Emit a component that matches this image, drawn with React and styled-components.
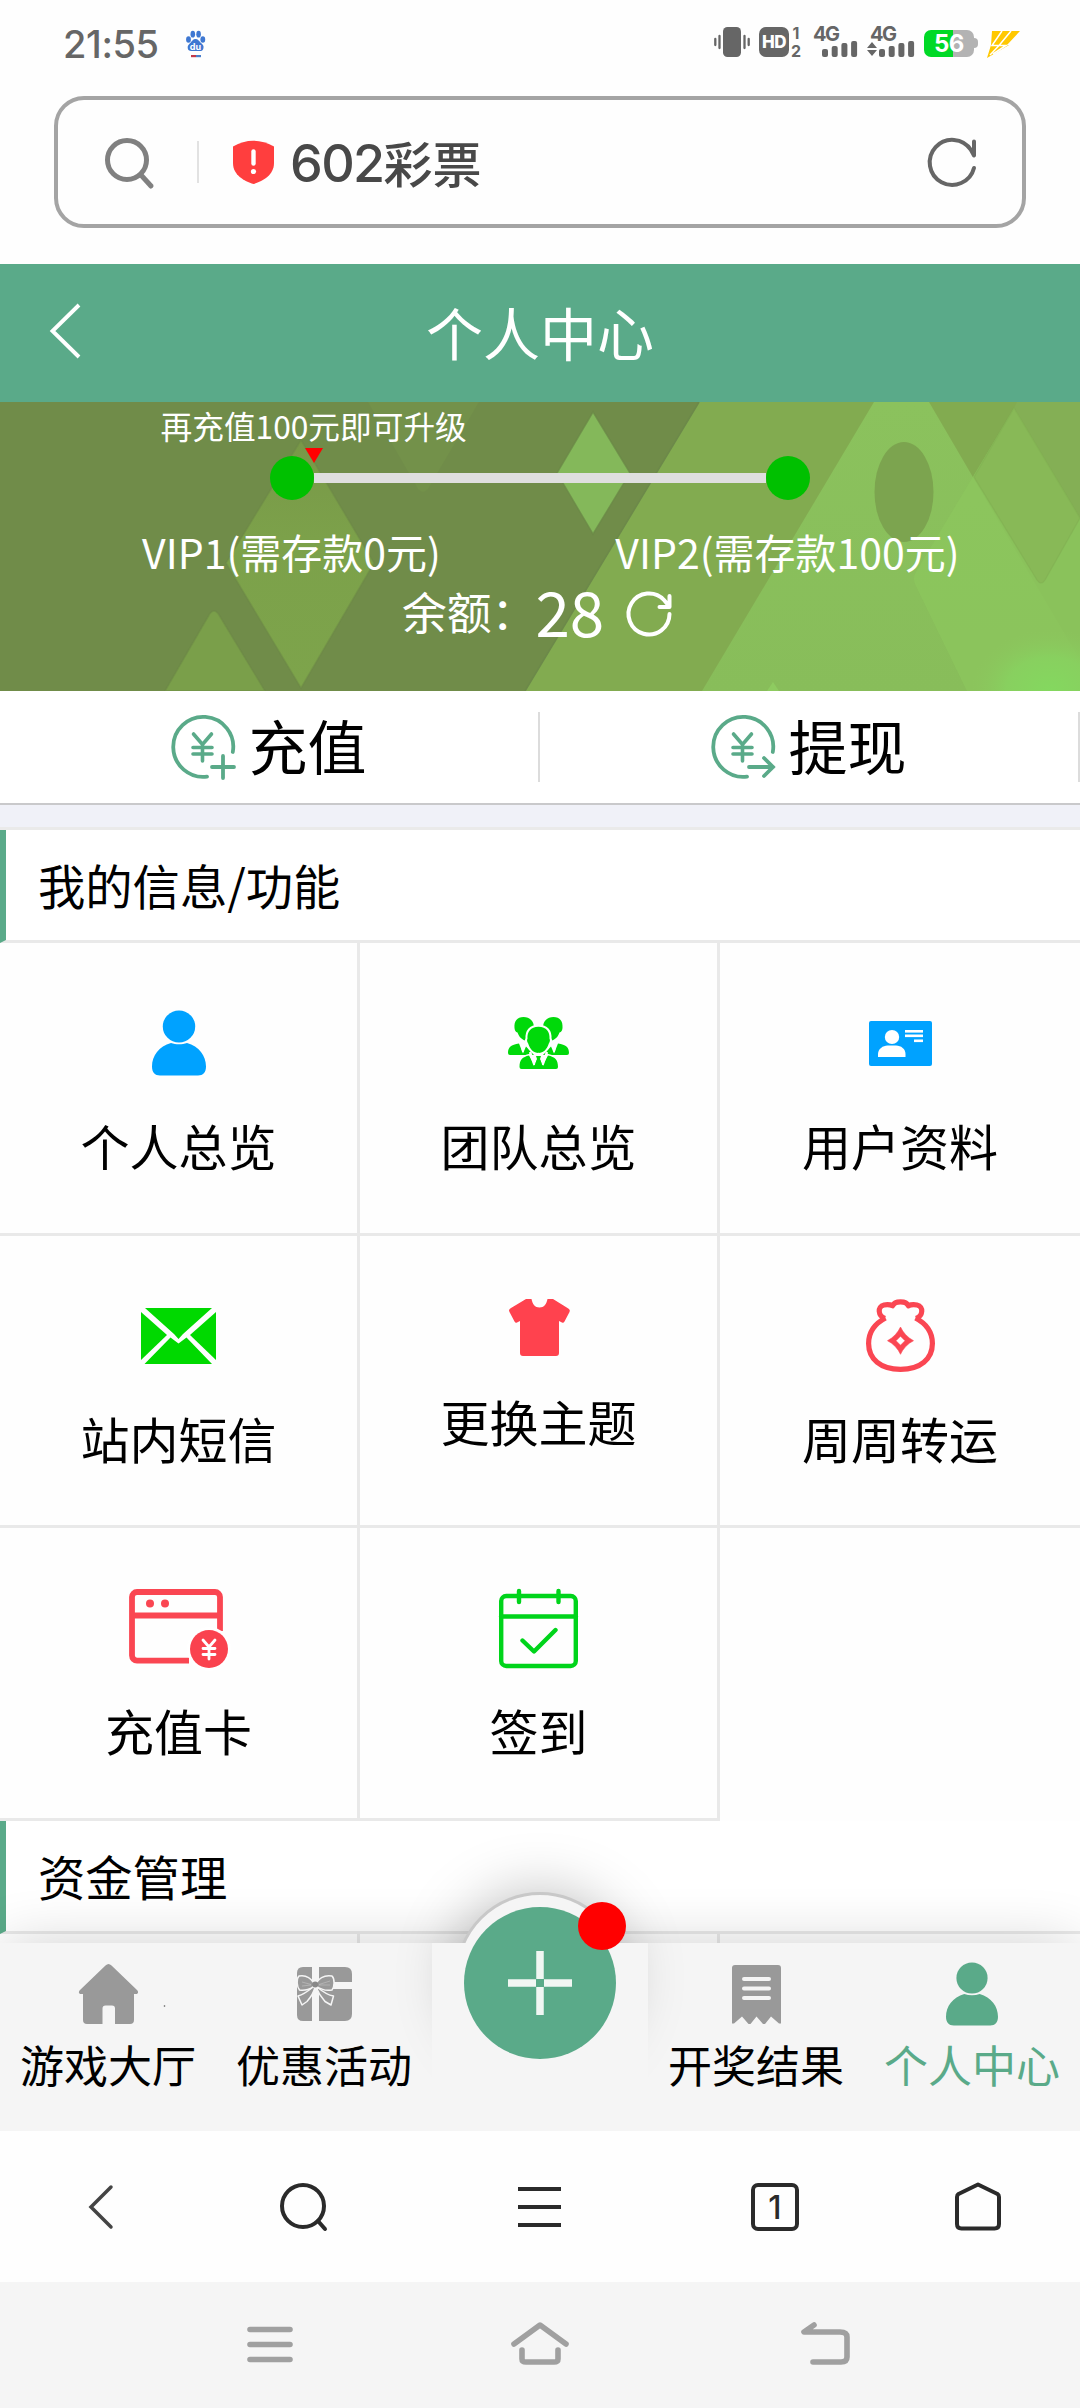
import React from "react";
import styled, { createGlobalStyle } from "styled-components";

const GREEN = "#5aaa89";
const CJK = '"Noto Sans CJK SC", "Noto Sans", sans-serif';
const LATIN = 'Inter, "Noto Sans CJK SC", sans-serif';

const GlobalStyle = createGlobalStyle`
  * { box-sizing: border-box; }
  html, body { margin: 0; padding: 0; }
  body { font-family: ${CJK}; background: #fdfdfd; color: #000; }
`;

const Screen = styled.div`
  width: 1080px;
  height: 2408px;
  overflow: hidden;
  display: flex;
  flex-direction: column;
  background: #fefefe;
`;

const Glyph = styled.svg`
  display: block;
  flex: none;
  overflow: visible;
  width: ${(p) => p.$w}px;
  height: ${(p) => p.$h}px;
`;

const Icon = ({ w, h, children, ...rest }) => (
  <Glyph $w={w} $h={h} viewBox={`0 0 ${w} ${h}`} fill="none" {...rest}>
    {children}
  </Glyph>
);

/* ---------- status bar ---------- */

const StatusBar = styled.header`
  flex: none;
  height: 96px;
  padding: 27px 60px 0 63px;
  display: flex;
  align-items: flex-start;
  color: #666;
  font-family: ${LATIN};
`;

const Clock = styled.span`
  width: 98px;
  margin-right: 25px;
  font-size: 38px;
  font-weight: 500;
  line-height: 34px;
  letter-spacing: -0.4px;
  white-space: nowrap;
`;

const StatusIcons = styled.div`
  margin-left: auto;
  display: flex;
  height: 31px;
`;

const Vibrate = styled(Icon)`
  margin-right: 9px;
`;

const HdBox = styled.div`
  width: 30px;
  height: 30px;
  border-radius: 7px;
  background: #666;
  color: #fff;
  font-size: 17px;
  font-weight: 800;
  line-height: 31px;
  text-align: center;
  letter-spacing: -0.6px;
`;

const SimStack = styled.div`
  width: 12px;
  margin: 0 11px 0 1px;
  display: flex;
  flex-direction: column;
  justify-content: space-between;
  font-size: 16px;
  font-weight: 700;
  line-height: 13px;
  text-align: center;
`;

const Signal = styled.div`
  width: ${(p) => p.$w}px;
  display: flex;
  flex-direction: column;
`;

const Network = styled.span`
  margin-left: ${(p) => p.$indent || 0}px;
  font-size: 20px;
  font-weight: 700;
  line-height: 15px;
  height: 14px;
  letter-spacing: -1.5px;
`;

const Battery = styled.div`
  width: 50px;
  height: 27px;
  margin-top: 3px;
  border-radius: 7px;
  background: linear-gradient(90deg, #00d926 29px, #b3b3b3 29px);
  color: #fff;
  font-size: 24px;
  font-weight: 700;
  line-height: 28px;
  text-align: center;
  letter-spacing: -0.5px;
`;

const BatteryNub = styled.div`
  width: 4px;
  height: 10px;
  margin: 11px 9px 0 0;
  border-radius: 0 4px 4px 0;
  background: #b3b3b3;
`;

const Bars = ({ offset, arrows }) => (
  <Icon w={48} h={16}>
    {arrows && <path d="M4 1 9 7H-1zM4 15 9 9H-1z" fill="#666" />}
    {[8, 11, 14, 16].map((h, i) => (
      <rect key={i} x={offset + i * 9.7} y={16 - h} width="6" height={h} rx="2" fill="#666" />
    ))}
  </Icon>
);

/* ---------- address bar ---------- */

const AddressBar = styled.div`
  flex: none;
  height: 132px;
  margin: 0 54px 36px;
  padding: 0 45px 0 47px;
  border: 4px solid #a4a4a4;
  border-radius: 30px;
  display: flex;
  align-items: center;
`;

const AddressDivider = styled.div`
  width: 2px;
  height: 42px;
  margin: 0 34px 0 43px;
  background: #e2e2e2;
`;

const Address = styled.div`
  flex: 1;
  margin-left: 16px;
  display: flex;
  align-items: center;
  color: #484848;
  font-size: 49px;
  font-weight: 500;
  line-height: 60px;
`;

const Digits = styled.span`
  padding-top: 4px;
  font-family: ${LATIN};
  font-size: 52px;
  letter-spacing: -1.6px;
`;

/* ---------- page header ---------- */

const PageHeader = styled.div`
  flex: none;
  height: 138px;
  padding: 0 50px 5px;
  display: grid;
  grid-template-columns: 32px 1fr 32px;
  align-items: center;
  background: ${GREEN};
  color: #fff;
`;

const PageTitle = styled.h1`
  margin: 0;
  font-size: 57px;
  font-weight: 400;
  line-height: 70px;
  text-align: center;
`;

/* ---------- VIP banner ---------- */

const Banner = styled.section`
  flex: none;
  position: relative;
  isolation: isolate;
  height: 289px;
  overflow: hidden;
  background: #708c49;
  color: #fff;
`;

const BannerArt = styled.svg`
  position: absolute;
  inset: 0;
  z-index: -1;
  width: 1080px;
  height: 289px;
`;

const UpgradeHint = styled.div`
  height: 54px;
  padding-left: 160.5px;
  font-size: 31.7px;
  line-height: 47px;
`;

const Track = styled.div`
  position: relative;
  height: 44px;
  margin-left: 270px;
  display: flex;
  align-items: center;
`;

const Dot = styled.div`
  width: 44px;
  height: 44px;
  border-radius: 50%;
  background: #00c000;
`;

const Rail = styled.div`
  width: 452px;
  height: 10px;
  background: #dfdfdf;
`;

const Pointer = styled.div`
  position: absolute;
  left: 35px;
  top: -8px;
  border: solid transparent;
  border-width: 15px 9px 0;
  border-top-color: #f00;
`;

const LevelRow = styled.div`
  margin: 28px 0 0 43.5px;
  display: grid;
  grid-template-columns: 496px 496px;
  font-size: 41px;
  line-height: 46px;
  text-align: center;
`;

const Balance = styled.div`
  height: 62px;
  margin-top: 5px;
  padding-left: 402px;
  display: flex;
  align-items: center;
  font-size: 44.8px;
`;

const Amount = styled.span`
  margin: 0 23px 0 -1px;
  font-size: 62px;
  line-height: 62px;
`;

const RefreshIcon = styled(Icon)`
  margin-top: 4px;
`;

/* ---------- deposit / withdraw ---------- */

const Actions = styled.div`
  flex: none;
  height: 114px;
  display: grid;
  grid-template-columns: 1fr 1fr;
  border-bottom: 2px solid #c9c9cb;
  background: #fff;
`;

const Action = styled.div`
  padding-left: 171px;
  display: flex;
  align-items: center;
  font-size: 59px;
`;

const ActionLabel = styled.span`
  margin: -4px auto 0 13.5px;
  line-height: 70px;
`;

const ActionDivider = styled.div`
  width: 2px;
  height: 70px;
  background: #dcdcdc;
`;

const Spacer = styled.div`
  flex: none;
  height: 25px;
  background: #f0f1f8;
  border-bottom: 3px solid #eaeaea;
`;

/* ---------- function grid ---------- */

const Sections = styled.main`
  flex: none;
  height: 1113px;
  overflow: hidden;
`;

const SectionTitle = styled.h2`
  height: 113px;
  margin: 0;
  padding-left: 32px;
  border-left: 6px solid ${GREEN};
  border-bottom: 3px solid #e9e9e9;
  font-size: 47.3px;
  font-weight: 400;
  line-height: 110px;
  background: #fff;
`;

const FunctionGrid = styled.div`
  display: grid;
  grid-template-columns: repeat(3, 360px);
  grid-auto-rows: 292.67px;
`;

const NextGrid = styled(FunctionGrid)`
  grid-auto-rows: 60px;
`;

const Cell = styled.div`
  padding-top: 50px;
  display: flex;
  flex-direction: column;
  align-items: center;
  border-right: ${(p) => (p.$last ? 0 : 3)}px solid #e9e9e9;
  border-bottom: 3px solid #e9e9e9;
`;

const IconSlot = styled.div`
  height: ${(p) => p.$h}px;
  display: flex;
  align-items: center;
`;

const CellLabel = styled.div`
  margin-top: 17px;
  font-size: 49px;
  line-height: 69px;
`;

/* ---------- tab bar ---------- */

const TabBar = styled.nav`
  flex: none;
  position: relative;
  height: 188px;
  display: grid;
  grid-template-columns: repeat(5, 216px);
  background: #f5f5f5;
  box-shadow: 0 0 60px -4px rgba(0, 0, 0, 0.2);
`;

const Tab = styled.div`
  padding-top: 18px;
  display: flex;
  flex-direction: column;
  align-items: center;
  color: ${(p) => (p.$active ? GREEN : "#000")};
`;

const TabIcon = styled.div`
  height: 66px;
  display: flex;
  align-items: center;
`;

const TabLabel = styled.span`
  margin-top: 7px;
  font-size: 44px;
  line-height: 61px;
`;

const AddTab = styled.div`
  position: relative;
  display: flex;
  justify-content: center;
`;

const Bulge = styled.div`
  position: absolute;
  left: 22.5px;
  top: -51px;
  width: 170px;
  height: 170px;
  border-radius: 50%;
  border: 3px solid #c8c8c8;
  background: #f5f5f5;
  box-shadow: 0 0 60px rgba(0, 0, 0, 0.26);
`;

const AddBase = styled.div`
  position: absolute;
  inset: 0;
  background: #f5f5f5;
`;

const AddButton = styled.div`
  position: relative;
  width: 152px;
  height: 152px;
  margin-top: -36px;
  border-radius: 50%;
  background: ${GREEN};
  display: grid;
  place-items: center;
`;

const Badge = styled.div`
  position: absolute;
  left: 114px;
  top: -5px;
  width: 48px;
  height: 48px;
  border-radius: 50%;
  background: #f00;
`;

/* ---------- browser and system bars ---------- */

const BrowserBar = styled.div`
  flex: none;
  position: relative;
  height: 151px;
  display: grid;
  grid-template-columns: 202px 203px 269px 202px 203px;
  place-items: center;
  background: #fefefe;
`;

const TabCount = styled.div`
  width: 48px;
  height: 48px;
  border: 4px solid #2a2a2a;
  border-radius: 7px;
  color: #2a2a2a;
  font-family: ${LATIN};
  font-size: 32px;
  font-weight: 500;
  line-height: 41px;
  text-align: center;
`;

const SystemBar = styled.div`
  flex: none;
  position: relative;
  height: 126px;
  padding: 0 0 4px 135px;
  display: grid;
  grid-template-columns: 270px 270px 300px;
  place-items: center;
  background: #f5f5f5;
`;

/* ---------- drawings ---------- */

const Paw = () => (
  <Icon w={19} h={31}>
    <g fill="#3f78d2">
      <ellipse cx="2.500" cy="12.500" rx="2.400" ry="3.300" />
      <ellipse cx="6.800" cy="7.200" rx="2.300" ry="3.400" />
      <ellipse cx="12.600" cy="7.200" rx="2.300" ry="3.400" />
      <ellipse cx="16.800" cy="12.500" rx="2.400" ry="3.300" />
      <path d="M9.500 12c2.500 0 3.500 2 5 3.500 2 1.800 3.500 3 3 5.500-.5 3-2.500 3.200-4.500 3H6c-2.500.2-4-.5-4.300-3-.3-2.500 1.300-3.700 3-5.500C6.200 14 7 12 9.500 12z" />
    </g>
    <rect x="5" y="28" width="5" height="2.200" fill="#c23a4a" />
    <rect x="10" y="28" width="5" height="2.200" fill="#4a7fc9" />
    <text x="9.500" y="22.500" fill="#fff" fontSize="9" fontWeight="700" textAnchor="middle" fontFamily="Inter, sans-serif">du</text>
  </Icon>
);

const Person = ({ w, h, color }) => (
  <Glyph $w={w} $h={h} viewBox="0 0 54 65" preserveAspectRatio="none">
    <ellipse cx="27" cy="15.500" rx="16.200" ry="16" fill={color} />
    <path d="M19 32c5 1.800 11 1.800 16 0C47 35.500 54 44.500 54 55.500c0 6-3 9-8 9H8c-5 0-8-3-8-9 0-11 7-20 19-23.500z" fill={color} />
  </Glyph>
);

const Team = () => (
  <Icon w={61} h={52}>
    <g fill="#00d90a">
      <path d="M15.500 0C22 0 26 4 26 11v8l-7 5c-5-1-8-4-9.500-8.500C7.500 15 6.800 13.500 6.500 11 6 4 9 0 15.500 0z" />
      <path d="M45.500 0C39 0 35 4 35 11v8l7 5c5-1 8-4 9.500-8.500 2-.5 2.700-2 3-4.500.5-7-2.500-11-9-11z" />
      <path d="M11 26.500l4 10 3-7 8 8.500H2q-2 0-2-2c0-6 3-8 11-9.500z" />
      <path d="M50 26.500l-4 10-3-7-8 8.500h24q2 0 2-2c0-6-3-8-11-9.500z" />
    </g>
    <path d="M15 35l-1.500-7M46 35l1.500-7" stroke="#fff" strokeWidth="1.800" />
    <path d="M30.500 9.700c8 0 11.500 5 11 12 .8 1 .5 3-.8 5C39 32 35.500 36 30.500 36s-8.500-4-10.200-9.300c-1.300-2-1.600-4-.8-5-.5-7 3-12 11-12z" fill="#00d90a" stroke="#fff" strokeWidth="4" paintOrder="stroke" />
    <path d="M21 38.500l5.500 10 4-9.500 4 9.500 5.500-10c7 1.500 10 4 10 11.500q0 2-2 2H13.500q-2 0-2-2c0-7.500 3-10 9.500-11.500z" fill="#00d90a" stroke="#fff" strokeWidth="3" paintOrder="stroke" />
    <path d="M22 35l4.500 13M39 35l-4.500 13" stroke="#fff" strokeWidth="2.400" />
    <path d="M28 39h5l-1 3 2.500 7h-8l2.500-7z" fill="#00d90a" />
  </Icon>
);

const IdCard = () => (
  <Icon w={63} h={45}>
    <rect width="63" height="45" rx="2" fill="#00a2ff" />
    <g fill="#fff">
      <ellipse cx="23" cy="16" rx="7.200" ry="7" />
      <path d="M9 36v-3c0-5 5-8.500 9.500-8.500h8.500c5 0 9.500 3.500 9.500 8.500v3z" />
      <rect x="36" y="9" width="18" height="2.600" />
      <rect x="36" y="13.500" width="18" height="2.600" />
      <rect x="45" y="18.500" width="9" height="2.600" />
    </g>
  </Icon>
);

const Mail = () => (
  <Icon w={75} h={56}>
    <g fill="#00d900">
      <path d="M4 0h67L42 26l-4.500 5-4.500-5z" />
      <path d="M0 4l26 23L0 52z" />
      <path d="M75 4L49 27l26 25z" />
      <path d="M3.500 56L29.500 29.500l8 6 8-6L71 56z" />
    </g>
  </Icon>
);

const Shirt = () => (
  <Icon w={62} h={57}>
    <path d="M18 0h5.500c1 5 3.500 8.500 8 8.500s7-3.500 8-8.500H45l14.500 9c2.500 1.500 2.700 2.200 2 4l-5 9.500c-.7 1.200-1.500 1.500-2.500 1L51 22v32c0 2-1 3-3 3H15c-2 0-3-1-3-3V22l-3 1.500c-1 .5-1.800.2-2.500-1l-5-9.500c-.9-1.800-.7-2.500 1.500-4z" fill="#ff424e" />
  </Icon>
);

const Bag = () => (
  <Icon w={69} h={73} stroke="#fa4652" strokeWidth="5.200" strokeLinejoin="round">
    <path d="M19 19.500c-7-2.500-8-12-1-13.500 3.500-.7 6-.5 8.500.8C29 1.500 40 1.500 42.500 6.800c2.500-1.300 5-1.500 8.500-.8 7 1.500 6 11-1 13.500" />
    <path d="M19.500 19C8 25 2.600 34 2.600 44.500c0 15.500 12 25.800 31.900 25.800s31.900-10.300 31.900-25.800C66.400 34 61 25 49.500 19" />
    <path fillRule="evenodd" d="M34.500 28c2.500 5.500 7 10.500 13 13.700-6 3-10.500 8-13 13.600-2.500-5.600-7-10.600-13-13.600 6-3.200 10.500-8.200 13-13.700zM34.500 37.200L30 41.700l4.500 4.500 4.500-4.500z" fill="#fa4652" stroke="#fa4652" strokeWidth="0.600" />
  </Icon>
);

const RechargeCard = () => (
  <Icon w={99} h={79} stroke="#fa4652">
    <path d="M60 71.600H8a5 5 0 0 1-5-5V8a5 5 0 0 1 5-5h78a5 5 0 0 1 5 5v34M3 26.500h88" strokeWidth="5.800" />
    <circle cx="80" cy="60" r="22" fill="#fff" stroke="none" />
    <circle cx="80" cy="60" r="19" fill="#fa424e" stroke="none" />
    <circle cx="21" cy="14.500" r="4" fill="#fa4652" stroke="none" />
    <circle cx="36" cy="14.500" r="4" fill="#fa4652" stroke="none" />
    <path d="M74 51l6 7 6-7M80 58v12M74 59.500h12M74 65.500h12" stroke="#fff" strokeWidth="2.800" strokeLinecap="round" />
  </Icon>
);

const Calendar = () => (
  <Icon w={79} h={79} stroke="#00d41b" strokeWidth="4.400" strokeLinecap="round" strokeLinejoin="round">
    <rect x="2.200" y="7" width="74.600" height="70" rx="5" />
    <path d="M2 27.500h75M20 2v11M59.500 2v11M23.500 51.500l11.500 11 21.500-21.500" />
  </Icon>
);

const Yen = ({ tail }) => (
  <Icon w={64} h={64} stroke={GREEN} strokeWidth="3.800" strokeLinecap="round">
    <path d="M36 61.600A30 30 0 1 1 61.800 37" />
    <path d="M22.500 19L31.500 29.500 40.500 19M31.500 29.500V46M22 32.500h19M22 39h19" strokeWidth="3.600" />
    {tail === "plus" ? <path d="M41 52h22M52 41v22" /> : <path d="M38 52h24M53 43l9 9-9 9" />}
  </Icon>
);

const Home = () => (
  <Icon w={59} h={60} fill="#999">
    <path d="M26.500 1.500q3-3 6 0L58 26c2 2 1 4-1 4h-2v26q0 4-4 4H36V44.500q0-3-3-3h-6.500q-3 0-3 3V60H8q-4 0-4-4V30H2c-2 0-3-2-1-4z" />
    <circle cx="85.500" cy="42" r="0.800" fill="#555" />
  </Icon>
);

const Gift = () => (
  <Icon w={55} h={54}>
    <g fill="#999">
      <path d="M15 0v54H6q-6 0-6-6V6q0-6 6-6z" />
      <path d="M22 0h26q7 0 7 7v8H22zM22 22h33v25q0 7-7 7H22z" />
    </g>
    <g fill="#999" stroke="#f5f5f5" strokeWidth="1.500" strokeLinejoin="round">
      <path d="M16 20C10 25 5 28 1 29l4 9 5-3.500C14 30 17 25 18 20zM20 20c6 5 10 8 16.500 9L34 38l-6-3.500C24 30 21 25 19 20z" />
      <path d="M17 16C13 10 7 8 2 9c-3 3-2 11 .5 14C8 24 14 22 17 19zM19 16c4-6 10-8 16-7 3 3 2.500 11 0 14-6 1-12-1-16-4z" />
    </g>
    <circle cx="18.200" cy="17.500" r="3" fill="#888" />
    <path d="M5 15l9 2.500M5 19l9-1M33 14l-11 3.500M33 18l-11 0" stroke="#c4c4c4" strokeWidth="0.600" />
  </Icon>
);

const Receipt = () => (
  <Icon w={49} h={59}>
    <path d="M3 0h43q3 0 3 3v55.500h-2l-8-7L33 59h-2l-6.500-7.500L18.500 59h-2l-6.500-7.500L2 58.500H0V3q0-3 3-3z" fill="#999" />
    <path d="M12 14h25M12 23.500h25M12 33h25" stroke="#f5f5f5" strokeWidth="4" strokeLinecap="round" />
  </Icon>
);

const BannerBackground = () => (
  <BannerArt viewBox="0 0 1080 289">
    <defs>
      <linearGradient id="diamond" x1="0" y1="0" x2="0" y2="1">
        <stop offset="0" stopColor="#789848" />
        <stop offset="0.400" stopColor="#7ca14a" />
        <stop offset="1" stopColor="#7da44b" />
      </linearGradient>
      <linearGradient id="beam" x1="0" y1="0" x2="0" y2="1">
        <stop offset="0" stopColor="#8bc25d" />
        <stop offset="1" stopColor="#88bd5a" />
      </linearGradient>
      <radialGradient id="glow">
        <stop offset="0" stopColor="#84d85f" />
        <stop offset="0.550" stopColor="#88d05f" />
        <stop offset="1" stopColor="#8cc65d" stopOpacity="0" />
      </radialGradient>
    </defs>
    <path d="M368 0h111l-51 87q-5 6-10 0z" fill="#73914a" />
    <path d="M301 38l73 123-73 125-75-125z" fill="url(#diamond)" stroke="#6b8846" strokeOpacity=".5" strokeWidth="1.500" />
    <path d="M209 213q5-8 10 0l46 76H165z" fill="#7a9f4a" stroke="#6b8846" strokeOpacity=".5" strokeWidth="1.500" />
    <path d="M699 0h381v289H525z" fill="#82ab50" />
    <path d="M699 0L525 289" stroke="#6c8949" strokeWidth="1.600" />
    <path d="M593 10l37 61-37 61-36-61z" fill="#84b85a" stroke="#6a8746" strokeOpacity=".7" strokeWidth="1.500" />
    <path d="M874 0h55l169 289H702z" fill="url(#beam)" />
    <path d="M1014 6L1017 0h63v116z" fill="#84af55" />
    <path d="M1014 6L916 170q-4 7 0 14l51 105h113V116z" fill="#8cc65d" fillOpacity=".85" />
    <path d="M1014 6l66 110-35 62q-4 6-8 0L974 75z" fill="#88b957" stroke="#7fae52" strokeOpacity=".5" strokeWidth="1.200" />
    <ellipse cx="904" cy="90" rx="29.500" ry="50" fill="#7ca44f" />
    <path d="M767 289l6-9 6 9z" fill="#8ecb60" />
    <ellipse cx="1050" cy="289" rx="80" ry="62" fill="url(#glow)" />
  </BannerArt>
);

const functions = [
  { label: "个人总览", icon: <Person w={54} h={65} color="#00a2ff" /> },
  { label: "团队总览", icon: <Team /> },
  { label: "用户资料", icon: <IdCard /> },
  { label: "站内短信", icon: <Mail /> },
  { label: "更换主题", icon: <Shirt />, slot: 83 },
  { label: "周周转运", icon: <Bag /> },
  { label: "充值卡", icon: <RechargeCard /> },
  { label: "签到", icon: <Calendar /> },
];

const NavTab = ({ label, icon, active }) => (
  <Tab $active={active}>
    <TabIcon>{icon}</TabIcon>
    <TabLabel>{label}</TabLabel>
  </Tab>
);

export default function App() {
  return (
    <>
      <GlobalStyle />
      <Screen>
        <StatusBar>
          <Clock>21:55</Clock>
          <Paw />
          <StatusIcons>
            <Vibrate w={36} h={30}>
              <rect x="9" width="18" height="30" rx="4.500" fill="#666" />
              <path d="M5.500 9v12M30.500 9v12M1.300 12v6M34.700 12v6" stroke="#666" strokeWidth="2.300" strokeLinecap="round" />
            </Vibrate>
            <HdBox>HD</HdBox>
            <SimStack>
              <span>1</span>
              <span>2</span>
            </SimStack>
            <Signal $w={55}>
              <Network>4G</Network>
              <Bars offset={9} />
            </Signal>
            <Signal $w={56}>
              <Network $indent={2}>4G</Network>
              <Bars offset={11} arrows />
            </Signal>
            <Battery>56</Battery>
            <BatteryNub />
            <Icon w={33} h={31}>
              <path d="M5 4h28L20 18h2L0 31l4-13z" fill="#ffc800" />
              <path d="M15 4L5 18.500h7L3 28M24 4L12 18.500h7L6 27" stroke="#fff" strokeWidth="1.500" />
            </Icon>
          </StatusIcons>
        </StatusBar>

        <AddressBar>
          <Icon w={49} h={51} stroke="#808080" strokeWidth="5">
            <circle cx="22" cy="23" r="19.500" />
            <path d="M36 38l10 11" strokeLinecap="round" />
          </Icon>
          <AddressDivider />
          <Icon w={41} h={44}>
            <path d="M0 6.500Q20-5 41 6.500V23c0 12-11 18-20.500 21C11 41 0 35 0 23z" fill="#ff3e3e" />
            <path d="M20.500 11.500v12" stroke="#fff" strokeWidth="4.400" strokeLinecap="round" />
            <circle cx="20.500" cy="31.500" r="2.600" fill="#fff" />
          </Icon>
          <Address>
            <Digits>602</Digits>彩票
          </Address>
          <Icon w={48} h={50} stroke="#666" strokeWidth="4" strokeLinecap="round" strokeLinejoin="round">
            <path d="M45 31A22.500 22.500 0 1 1 42 13l3 5.500V4.500" />
          </Icon>
        </AddressBar>

        <PageHeader>
          <Icon w={32} h={56} stroke="#fff" strokeWidth="3.900">
            <path d="M29 2L2.500 28 29 54" />
          </Icon>
          <PageTitle>个人中心</PageTitle>
        </PageHeader>

        <Banner>
          <BannerBackground />
          <UpgradeHint>再充值100元即可升级</UpgradeHint>
          <Track>
            <Dot />
            <Rail />
            <Dot />
            <Pointer />
          </Track>
          <LevelRow>
            <span>VIP1(需存款0元)</span>
            <span>VIP2(需存款100元)</span>
          </LevelRow>
          <Balance>
            余额：<Amount>28</Amount>
            <RefreshIcon w={45} h={42} stroke="#fff" strokeWidth="4" strokeLinecap="round" strokeLinejoin="round">
              <path d="M42.500 23A20.500 20.500 0 1 1 37 9l5 6M42.500 5v11H32.500" />
            </RefreshIcon>
          </Balance>
        </Banner>

        <Actions>
          <Action>
            <Yen tail="plus" />
            <ActionLabel>充值</ActionLabel>
            <ActionDivider />
          </Action>
          <Action>
            <Yen tail="arrow" />
            <ActionLabel>提现</ActionLabel>
            <ActionDivider />
          </Action>
        </Actions>
        <Spacer />

        <Sections>
          <SectionTitle>我的信息/功能</SectionTitle>
          <FunctionGrid>
            {functions.map((f, i) => (
              <Cell key={f.label} $last={i % 3 === 2}>
                <IconSlot $h={f.slot || 100}>{f.icon}</IconSlot>
                <CellLabel>{f.label}</CellLabel>
              </Cell>
            ))}
          </FunctionGrid>
          <SectionTitle>资金管理</SectionTitle>
          <NextGrid>
            <Cell />
            <Cell />
            <Cell $last />
          </NextGrid>
        </Sections>

        <TabBar>
          <NavTab label="游戏大厅" icon={<Home />} />
          <NavTab label="优惠活动" icon={<Gift />} />
          <AddTab>
            <Bulge />
            <AddBase />
            <AddButton>
              <Icon w={64} h={64}>
                <path d="M0 32h28M36 32h28M32 0v28M32 36v28" stroke="#f1f6f3" strokeWidth="7.500" />
              </Icon>
              <Badge />
            </AddButton>
          </AddTab>
          <NavTab label="开奖结果" icon={<Receipt />} />
          <NavTab label="个人中心" icon={<Person w={52} h={63} color={GREEN} />} active />
        </TabBar>

        <BrowserBar>
          <Icon w={24} h={44} stroke="#444" strokeWidth="3.500" strokeLinecap="round">
            <path d="M22 2L2 22l20 20" />
          </Icon>
          <Icon w={48} h={48} stroke="#2a2a2a" strokeWidth="4" strokeLinecap="round">
            <circle cx="23" cy="23" r="21" />
            <path d="M38 38l7 8" />
          </Icon>
          <Icon w={43} h={40} stroke="#2a2a2a" strokeWidth="4">
            <path d="M0 2h43M0 20h43M0 38h43" />
          </Icon>
          <TabCount>1</TabCount>
          <Icon w={46} h={49} stroke="#2a2a2a" strokeWidth="4" strokeLinejoin="round">
            <path d="M23 2.500L42.500 12q1.500 1 1.500 3v27q0 4.500-4.500 4.500h-33Q2 46.500 2 42V15q0-2 1.500-3z" />
          </Icon>
        </BrowserBar>

        <SystemBar>
          <Icon w={46} h={37} stroke="#a0a0a0" strokeWidth="5.600" strokeLinecap="round">
            <path d="M3 4.500h40M3 19.500h40M3 34.500h40" />
          </Icon>
          <Icon w={58} h={43} stroke="#a0a0a0" strokeWidth="5.600" strokeLinecap="round" strokeLinejoin="round">
            <path d="M3 22L29 3l26 19M11 28v9q0 3 4 3h28q4 0 4-3v-9" />
          </Icon>
          <Icon w={49} h={43} stroke="#a0a0a0" strokeWidth="5.600" strokeLinecap="round" strokeLinejoin="round">
            <path d="M13 3L3 10h36q7 0 7 5v20q0 5-6 5H12" />
          </Icon>
        </SystemBar>
      </Screen>
    </>
  );
}
